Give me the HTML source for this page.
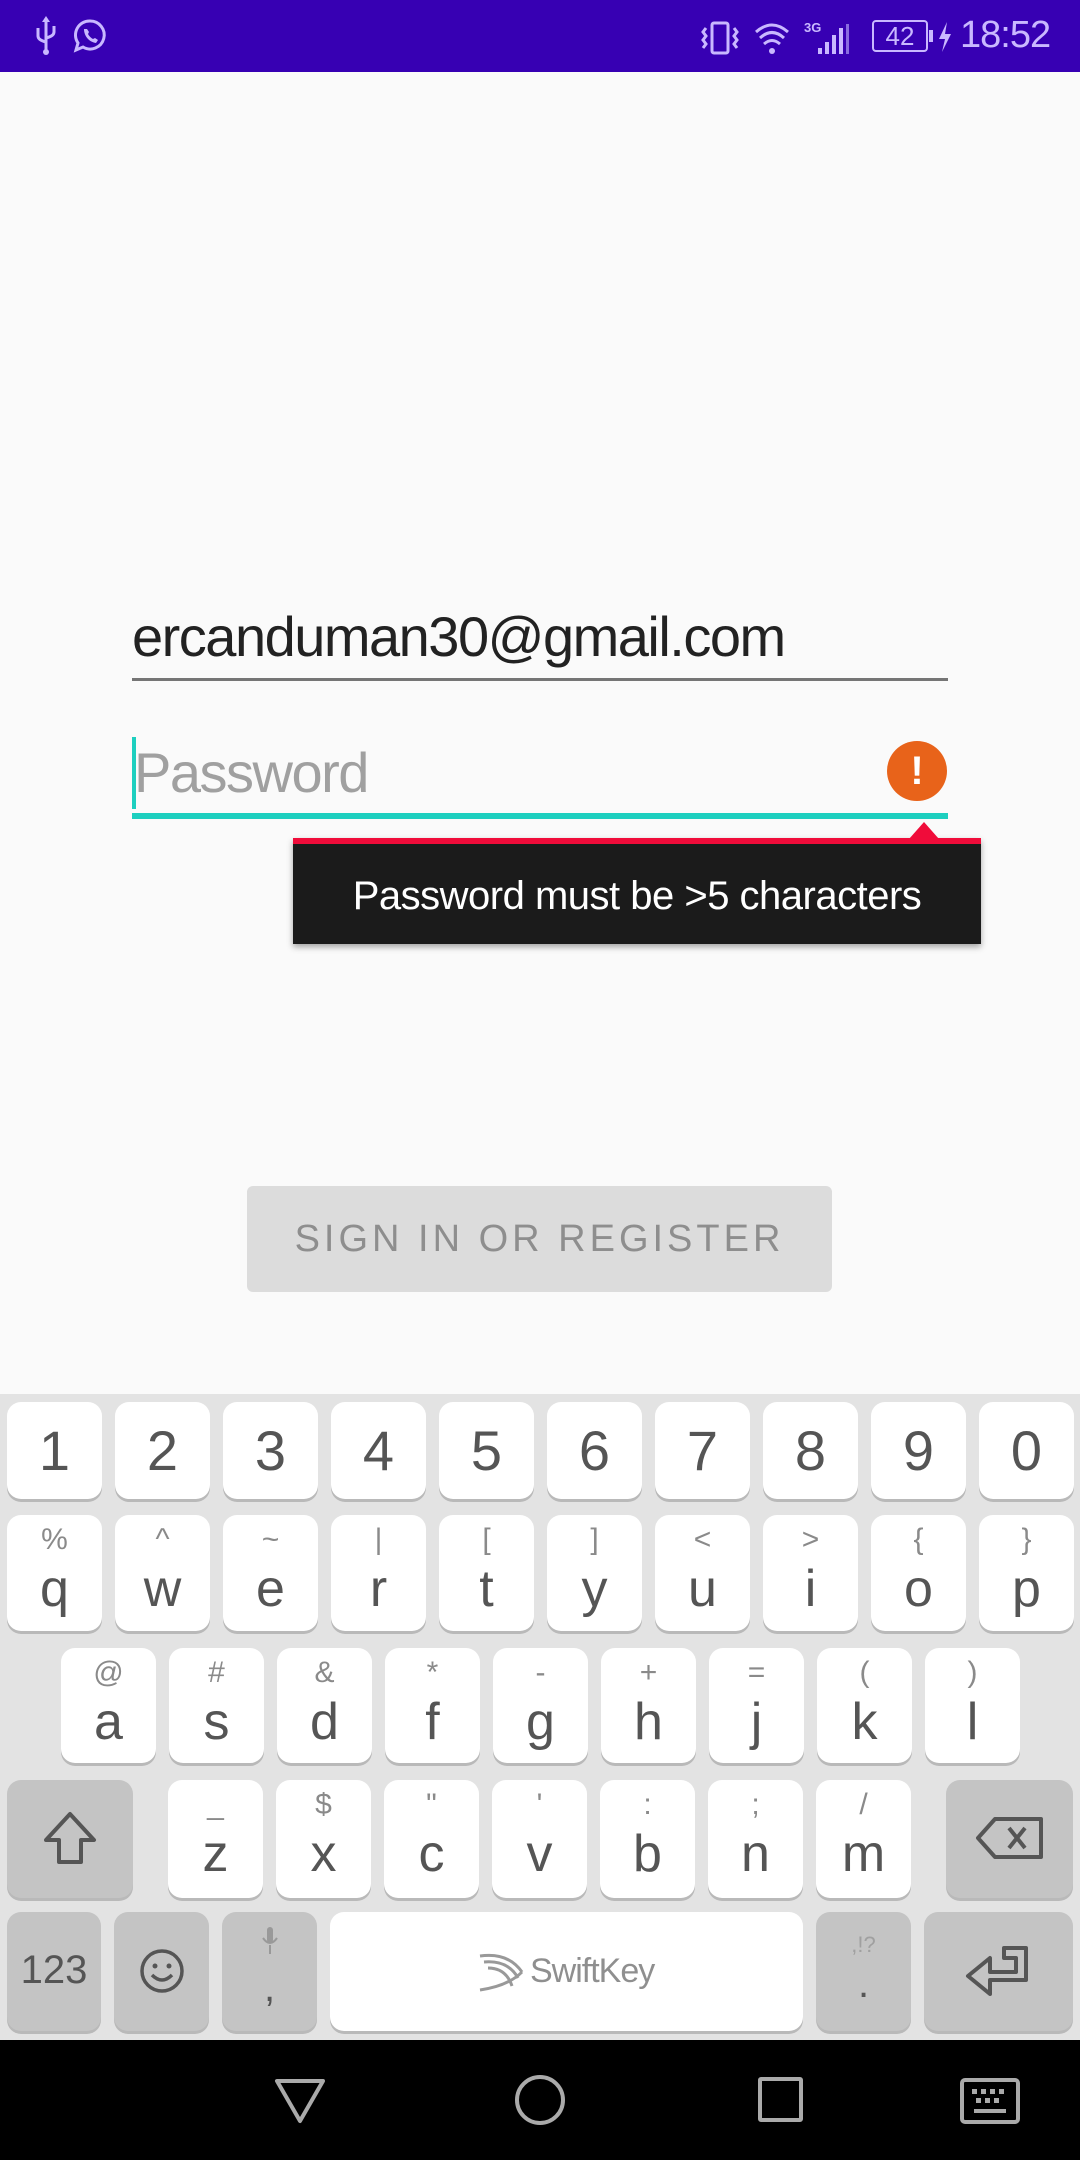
<!DOCTYPE html>
<html><head><meta charset="utf-8"><style>
*{margin:0;padding:0;box-sizing:border-box}
body{width:1080px;height:2160px;background:#fafafa;position:relative;overflow:hidden;font-family:"Liberation Sans",sans-serif}
.abs{position:absolute}
.kb{position:absolute;left:0;top:1394px;width:1080px;height:646px;background:#e3e3e3}
.k{position:absolute;background:#fff;border-radius:14px;box-shadow:0 3px 0 #b9b9b9;color:#555;text-align:center}
.k.g{background:#c4c4c4}
.k .m{position:absolute;left:0;right:0;font-size:52px;font-weight:300}
.k .s{position:absolute;left:0;right:0;font-size:30px;color:#8a8a8a}
.nav{position:absolute;left:0;top:2040px;width:1080px;height:120px;background:#000}
</style></head><body>
<div class="abs" style="left:0;top:0;width:1080px;height:72px;background:#3700b3"></div>
<svg class="abs" style="left:34px;top:16px" width="24" height="40" viewBox="0 0 24 40"><g fill="none" stroke="#c9b8ff" stroke-width="3"><path d="M12 2 V36 M4 12 V20 Q4 24 12 26 M20 10 V16 Q20 20 12 22"/></g><circle cx="12" cy="36" r="3" fill="#c9b8ff"/><path d="M12 0 L8 6 H16 Z" fill="#c9b8ff"/></svg>
<svg class="abs" style="left:72px;top:18px" width="36" height="36" viewBox="0 0 36 36"><path d="M18 3a14 14 0 1 1-7 26l-7 3 2-7A14 14 0 0 1 18 3z" fill="none" stroke="#c9b8ff" stroke-width="3"/><path d="M12 11c0 7 5 13 12 14l2-3-3-2-2 1c-2-1-4-3-5-5l1-2-2-3z" fill="#c9b8ff"/></svg>
<svg class="abs" style="left:700px;top:20px" width="160" height="36" viewBox="0 0 160 36"><g fill="none" stroke="#c9b8ff" stroke-width="3"><rect x="12" y="3" width="16" height="30" rx="2"/><path d="M6 8 L3 12 L6 16 L3 20 L6 24 L3 28 M34 8 L37 12 L34 16 L37 20 L34 24 L37 28"/><path d="M56 12 Q72 -2 88 12 M60 18 Q72 7 84 18 M64 24 Q72 17 80 24"/></g><circle cx="72" cy="31" r="3" fill="#c9b8ff"/><text x="104" y="12" font-size="13" font-weight="bold" fill="#c9b8ff" font-family="Liberation Sans">3G</text><g fill="#c9b8ff"><rect x="118" y="28" width="4" height="6"/><rect x="125" y="22" width="4" height="12"/><rect x="132" y="15" width="4" height="19"/><rect x="139" y="8" width="4" height="26"/></g><rect x="146" y="4" width="3" height="30" fill="#8a6ce0"/></svg>
<div class="abs" style="left:872px;top:20px;width:56px;height:32px;border:2px solid #c9b8ff;border-radius:4px;color:#c9b8ff;font-size:26px;text-align:center;line-height:28px">42</div>
<div class="abs" style="left:929px;top:30px;width:4px;height:12px;background:#c9b8ff"></div>
<svg class="abs" style="left:938px;top:22px" width="14" height="30" viewBox="0 0 14 30"><path d="M9 0 L1 17 H7 L4 30 L13 12 H7 Z" fill="#c9b8ff"/></svg>
<div class="abs" style="left:960px;top:14px;color:#c9b8ff;font-size:38px;font-weight:300;letter-spacing:-1px">18:52</div>

<div class="abs" style="left:132px;top:604px;font-size:56px;color:#222;letter-spacing:-1.5px">ercanduman30@gmail.com</div>
<div class="abs" style="left:132px;top:678px;width:816px;height:3px;background:#757575"></div>
<div class="abs" style="left:132px;top:737px;width:4px;height:72px;background:#1dcfbf"></div>
<div class="abs" style="left:134px;top:740px;font-size:56px;color:#a0a0a0;letter-spacing:-1.5px">Password</div>
<div class="abs" style="left:887px;top:741px;width:60px;height:60px;border-radius:50%;background:#e8631a;color:#fff;font-size:40px;font-weight:bold;text-align:center;line-height:60px">!</div>
<div class="abs" style="left:132px;top:813px;width:816px;height:6px;background:#1dcfbf"></div>
<div class="abs" style="left:293px;top:838px;width:688px;height:106px;background:#1b1b1b;border-top:6px solid #f00c3a;box-shadow:0 3px 6px rgba(0,0,0,.35)"></div>
<div class="abs" style="left:909px;top:822px;width:0;height:0;border-left:15px solid transparent;border-right:15px solid transparent;border-bottom:17px solid #f00c3a"></div>
<div class="abs" style="left:293px;top:874px;width:688px;text-align:center;font-size:40px;color:#fff;letter-spacing:-0.5px">Password must be &gt;5 characters</div>

<div class="abs" style="left:247px;top:1186px;width:585px;height:106px;background:#dcdcdc;border-radius:6px;color:#8e8e8e;font-size:38px;text-align:center;line-height:106px;letter-spacing:4px">SIGN IN OR REGISTER</div>

<div class="kb"></div>
<div id="r"></div>
<script>
var h='';
var nums='1234567890';
for(var i=0;i<10;i++){h+='<div class="k" style="left:'+(7+108*i)+'px;top:1402px;width:95px;height:97px"><div class="m" style="top:16px;font-size:56px">'+nums[i]+'</div></div>';}
var r2='qwertyuiop',s2=['%','^','~','|','[',']','&lt;','&gt;','{','}'];
for(var i=0;i<10;i++){h+='<div class="k" style="left:'+(7+108*i)+'px;top:1515px;width:95px;height:116px"><div class="s" style="top:8px">'+s2[i]+'</div><div class="m" style="top:44px">'+r2[i]+'</div></div>';}
var r3='asdfghjkl',s3=['@','#','&amp;','*','-','+','=','(',')'];
for(var i=0;i<9;i++){h+='<div class="k" style="left:'+(61+108*i)+'px;top:1648px;width:95px;height:115px"><div class="s" style="top:8px">'+s3[i]+'</div><div class="m" style="top:44px">'+r3[i]+'</div></div>';}
var r4='zxcvbnm',s4=['_','$','"',"'",':',';','/'];
for(var i=0;i<7;i++){h+='<div class="k" style="left:'+(168+108*i)+'px;top:1780px;width:95px;height:118px"><div class="s" style="top:8px">'+s4[i]+'</div><div class="m" style="top:44px">'+r4[i]+'</div></div>';}
document.getElementById('r').outerHTML=h;
</script>
<div class="k g" style="left:7px;top:1780px;width:126px;height:118px"><svg style="margin-top:30px" width="60" height="56" viewBox="0 0 60 56"><path d="M30 4 L54 30 H41 V52 H19 V30 H6 Z" fill="none" stroke="#555" stroke-width="4" stroke-linejoin="round"/></svg></div>
<div class="k g" style="left:946px;top:1780px;width:127px;height:118px"><svg style="margin-top:36px" width="70" height="44" viewBox="0 0 70 44"><path d="M20 3 H66 V41 H20 L3 22 Z" fill="none" stroke="#555" stroke-width="4" stroke-linejoin="round"/><path d="M34 12 L50 32 M50 12 L34 32" stroke="#555" stroke-width="4"/></svg></div>
<div class="k g" style="left:7px;top:1912px;width:94px;height:119px"><div class="m" style="top:36px;font-size:40px">123</div></div>
<div class="k g" style="left:114px;top:1912px;width:95px;height:119px"><svg style="margin-top:36px" width="46" height="46" viewBox="0 0 46 46"><circle cx="23" cy="23" r="20" fill="none" stroke="#555" stroke-width="3.5"/><circle cx="16" cy="18" r="2.5" fill="#555"/><circle cx="30" cy="18" r="2.5" fill="#555"/><path d="M13 27 Q23 37 33 27" fill="none" stroke="#555" stroke-width="3.5"/></svg></div>
<div class="k g" style="left:222px;top:1912px;width:95px;height:119px"><svg style="margin-top:14px" width="20" height="30" viewBox="0 0 20 30"><rect x="7" y="1" width="6" height="16" rx="3" fill="#999"/><path d="M3 12 Q10 22 17 12 M10 19 V28" fill="none" stroke="#999" stroke-width="2"/></svg><div class="m" style="top:54px;font-size:40px">,</div></div>
<div class="k" style="left:330px;top:1912px;width:473px;height:119px"><svg style="position:absolute;left:148px;top:40px" width="50" height="40" viewBox="0 0 50 40"><path d="M2 4 Q30 0 44 20 M6 10 Q30 8 40 26 M10 16 Q28 16 34 34 M2 38 Q30 34 44 20" fill="none" stroke="#999" stroke-width="3"/></svg><div style="position:absolute;left:200px;top:40px;font-size:34px;color:#8f8f8f;letter-spacing:-1px">SwiftKey</div></div>
<div class="k g" style="left:816px;top:1912px;width:95px;height:119px"><div class="s" style="top:20px;font-size:22px;color:#a0a0a0">,!?</div><div class="m" style="top:50px;font-size:40px">.</div></div>
<div class="k g" style="left:924px;top:1912px;width:149px;height:119px"><svg style="margin-top:32px" width="70" height="56" viewBox="0 0 70 56"><path d="M40 4 H62 V36 H26 V50 L4 32 L26 14 V28 H52 V14 H40 Z" fill="none" stroke="#555" stroke-width="4" stroke-linejoin="round"/></svg></div>

<div class="nav"></div>
<svg class="abs" style="left:274px;top:2078px" width="52" height="46" viewBox="0 0 52 46"><path d="M3 3 H49 L26 43 Z" fill="none" stroke="#aaa" stroke-width="4" stroke-linejoin="round"/></svg>
<div class="abs" style="left:515px;top:2075px;width:50px;height:50px;border:4px solid #aaa;border-radius:50%"></div>
<div class="abs" style="left:758px;top:2077px;width:45px;height:45px;border:4px solid #aaa;border-radius:3px"></div>
<svg class="abs" style="left:960px;top:2078px" width="60" height="46" viewBox="0 0 60 46"><rect x="2" y="2" width="56" height="42" rx="3" fill="none" stroke="#aaa" stroke-width="4"/><g fill="#aaa"><rect x="12" y="11" width="5" height="5"/><rect x="21" y="11" width="5" height="5"/><rect x="30" y="11" width="5" height="5"/><rect x="39" y="11" width="5" height="5"/><rect x="16" y="20" width="5" height="5"/><rect x="25" y="20" width="5" height="5"/><rect x="34" y="20" width="5" height="5"/><rect x="14" y="31" width="32" height="4"/></g></svg>
</body></html>
